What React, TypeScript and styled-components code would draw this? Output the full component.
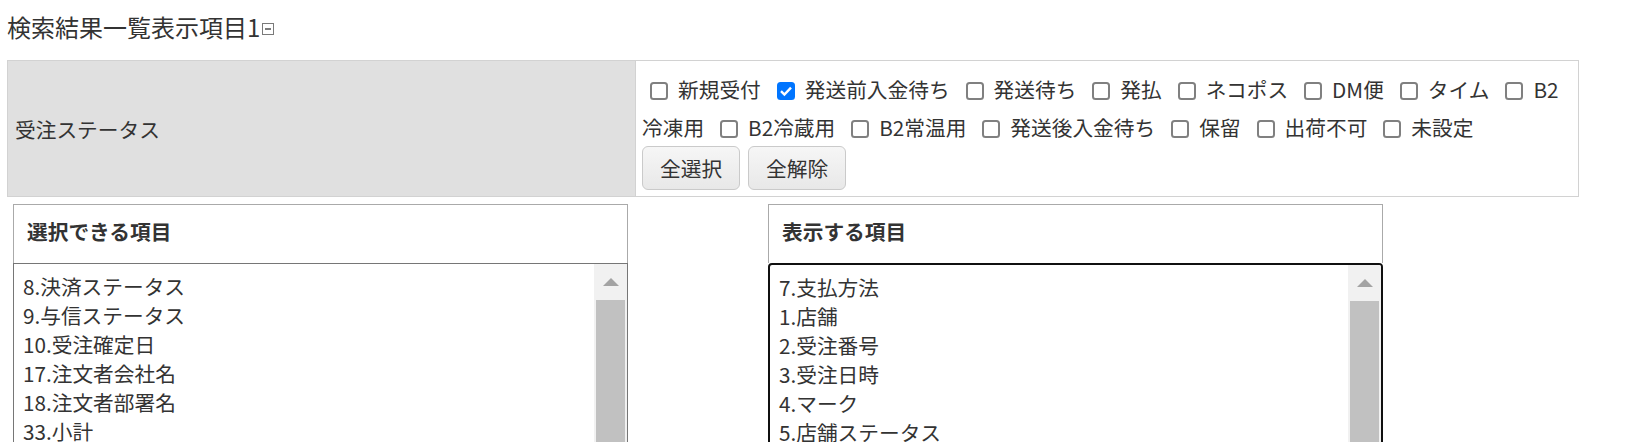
import styled, { createGlobalStyle } from "styled-components";

type Status = {
    label: string;
    checked: boolean;
}

const statuses: Array<Status> = [
    { label: "新規受付", checked: false },
    { label: "発送前入金待ち", checked: true },
    { label: "発送待ち", checked: false },
    { label: "発払", checked: false },
    { label: "ネコポス", checked: false },
    { label: "DM便", checked: false },
    { label: "タイム", checked: false },
    { label: "B2冷凍用", checked: false },
    { label: "B2冷蔵用", checked: false },
    { label: "B2常温用", checked: false },
    { label: "発送後入金待ち", checked: false },
    { label: "保留", checked: false },
    { label: "出荷不可", checked: false },
    { label: "未設定", checked: false },
]

const availableItems = ["8.決済ステータス", "9.与信ステータス", "10.受注確定日", "17.注文者会社名", "18.注文者部署名", "33.小計", "34.送料"]
const shownItems = ["7.支払方法", "1.店舗", "2.受注番号", "3.受注日時", "4.マーク", "5.店舗ステータス", "6.発送方法"]

const GlobalStyle = createGlobalStyle`
    body {
        margin: 0;
        background: #fff;
        color: #333;
        font-family: "Noto Sans CJK JP", "Noto Sans", sans-serif;
    }
`

const App = () => {
    return (
        <Page>
            <GlobalStyle />
            <Title>
                検索結果一覧表示項目1
                <CollapseIcon width="14" height="14" viewBox="0 0 14 14">
                    <rect x="1.5" y="1.5" width="11" height="11" fill="#fff" stroke="#7a7a7a" />
                    <line x1="4" y1="7" x2="10" y2="7" stroke="#444" strokeWidth="1.4" />
                </CollapseIcon>
            </Title>

            <FormTable>
                <HeaderCell>受注ステータス</HeaderCell>
                <ValueCell>
                    {statuses.map((s) => (
                        <CheckItem key={s.label}>
                            <CheckMark $checked={s.checked}>
                                {s.checked ? (
                                    <svg width="18" height="18" viewBox="0 0 18 18">
                                        <path d="M4 9.2 L7.4 12.6 L14 5.6" fill="none" stroke="#fff" strokeWidth="2.4" />
                                    </svg>
                                ) : null}
                            </CheckMark>
                            {s.label}
                        </CheckItem>
                    ))}
                    <ButtonRow>
                        <GreyButton>全選択</GreyButton>
                        <GreyButton>全解除</GreyButton>
                    </ButtonRow>
                </ValueCell>
            </FormTable>

            <PanelRow>
                <Panel>
                    <PanelHeader>選択できる項目</PanelHeader>
                    <ListBox $focused={false}>
                        <ListItems>
                            {availableItems.map((item) => <ListItem key={item}>{item}</ListItem>)}
                        </ListItems>
                        <ScrollTrack>
                            <ScrollArrow />
                            <ScrollThumb />
                        </ScrollTrack>
                    </ListBox>
                </Panel>
                <Panel>
                    <PanelHeader>表示する項目</PanelHeader>
                    <ListBox $focused={true}>
                        <ListItems>
                            {shownItems.map((item) => <ListItem key={item}>{item}</ListItem>)}
                        </ListItems>
                        <ScrollTrack>
                            <ScrollArrow />
                            <ScrollThumb />
                        </ScrollTrack>
                    </ListBox>
                </Panel>
            </PanelRow>
        </Page>
    )
}

export default App;

const Page = styled.div`
    padding: 9px 0 0 7px;
`

const Title = styled.div`
    font-size: 24px;
    line-height: 35px;
    height: 35px;
    margin-bottom: 16px;
    display: flex;
    align-items: center;
`

const CollapseIcon = styled.svg`
    margin-left: 1px;
    margin-top: 5px;
`

const FormTable = styled.div`
    display: grid;
    grid-template-columns: 628px 1fr;
    width: 1570px;
    border: 1px solid #d2d2d2;
    font-size: 20.7px;
`

const HeaderCell = styled.div`
    background: #e0e0e0;
    border-right: 1px solid #d2d2d2;
    display: flex;
    align-items: center;
    padding-left: 7px;
`

const ValueCell = styled.div`
    padding: 9px 6px 6px 6px;
    line-height: 38px;
`

const CheckItem = styled.label`
    margin-right: 8px;
`

const CheckMark = styled.span<{ $checked: boolean }>`
    display: inline-block;
    box-sizing: border-box;
    width: 18px;
    height: 18px;
    margin: 0 10px 0 8px;
    vertical-align: -2px;
    border: ${(p) => (p.$checked ? "none" : "2px solid #808080")};
    border-radius: 3.5px;
    background: ${(p) => (p.$checked ? "#0075ff" : "#fff")};
    line-height: 0;
`

const ButtonRow = styled.div`
    display: flex;
    gap: 8px;
    line-height: normal;
`

const GreyButton = styled.button`
    height: 44px;
    padding: 0 17px;
    font-family: inherit;
    font-size: 20.7px;
    color: #333;
    border: 1px solid #cacaca;
    border-radius: 6px;
    background: linear-gradient(#f6f6f6, #e8e8e8);
`

const PanelRow = styled.div`
    display: flex;
    gap: 140px;
    margin: 7px 0 0 6px;
`

const Panel = styled.div`
    width: 615px;
    display: flex;
    flex-direction: column;
`

const PanelHeader = styled.div`
    height: 59px;
    box-sizing: border-box;
    border: 1px solid #aaa;
    border-bottom: none;
    padding: 12px 0 0 13px;
    font-size: 20.7px;
    font-weight: bold;
    line-height: 29px;
`

const ListBox = styled.div<{ $focused: boolean }>`
    height: 240px;
    display: flex;
    box-sizing: border-box;
    border: ${(p) => (p.$focused ? "2px solid #101010" : "1px solid #767676")};
    border-radius: ${(p) => (p.$focused ? "4px" : "0")};
    overflow: hidden;
`

const ListItems = styled.div`
    flex: 1;
    padding: 8px 9px;
    font-size: 20.7px;
    line-height: 29px;
`

const ListItem = styled.div`
    white-space: nowrap;
`

const ScrollTrack = styled.div`
    width: 33px;
    background: #f1f1f1;
    display: flex;
    flex-direction: column;
    align-items: center;
`

const ScrollArrow = styled.div`
    margin-top: 14px;
    width: 0;
    height: 0;
    border-left: 8px solid transparent;
    border-right: 8px solid transparent;
    border-bottom: 8px solid #a3a3a3;
`

const ScrollThumb = styled.div`
    margin-top: 14px;
    width: 29px;
    flex: 1;
    background: #c1c1c1;
`
